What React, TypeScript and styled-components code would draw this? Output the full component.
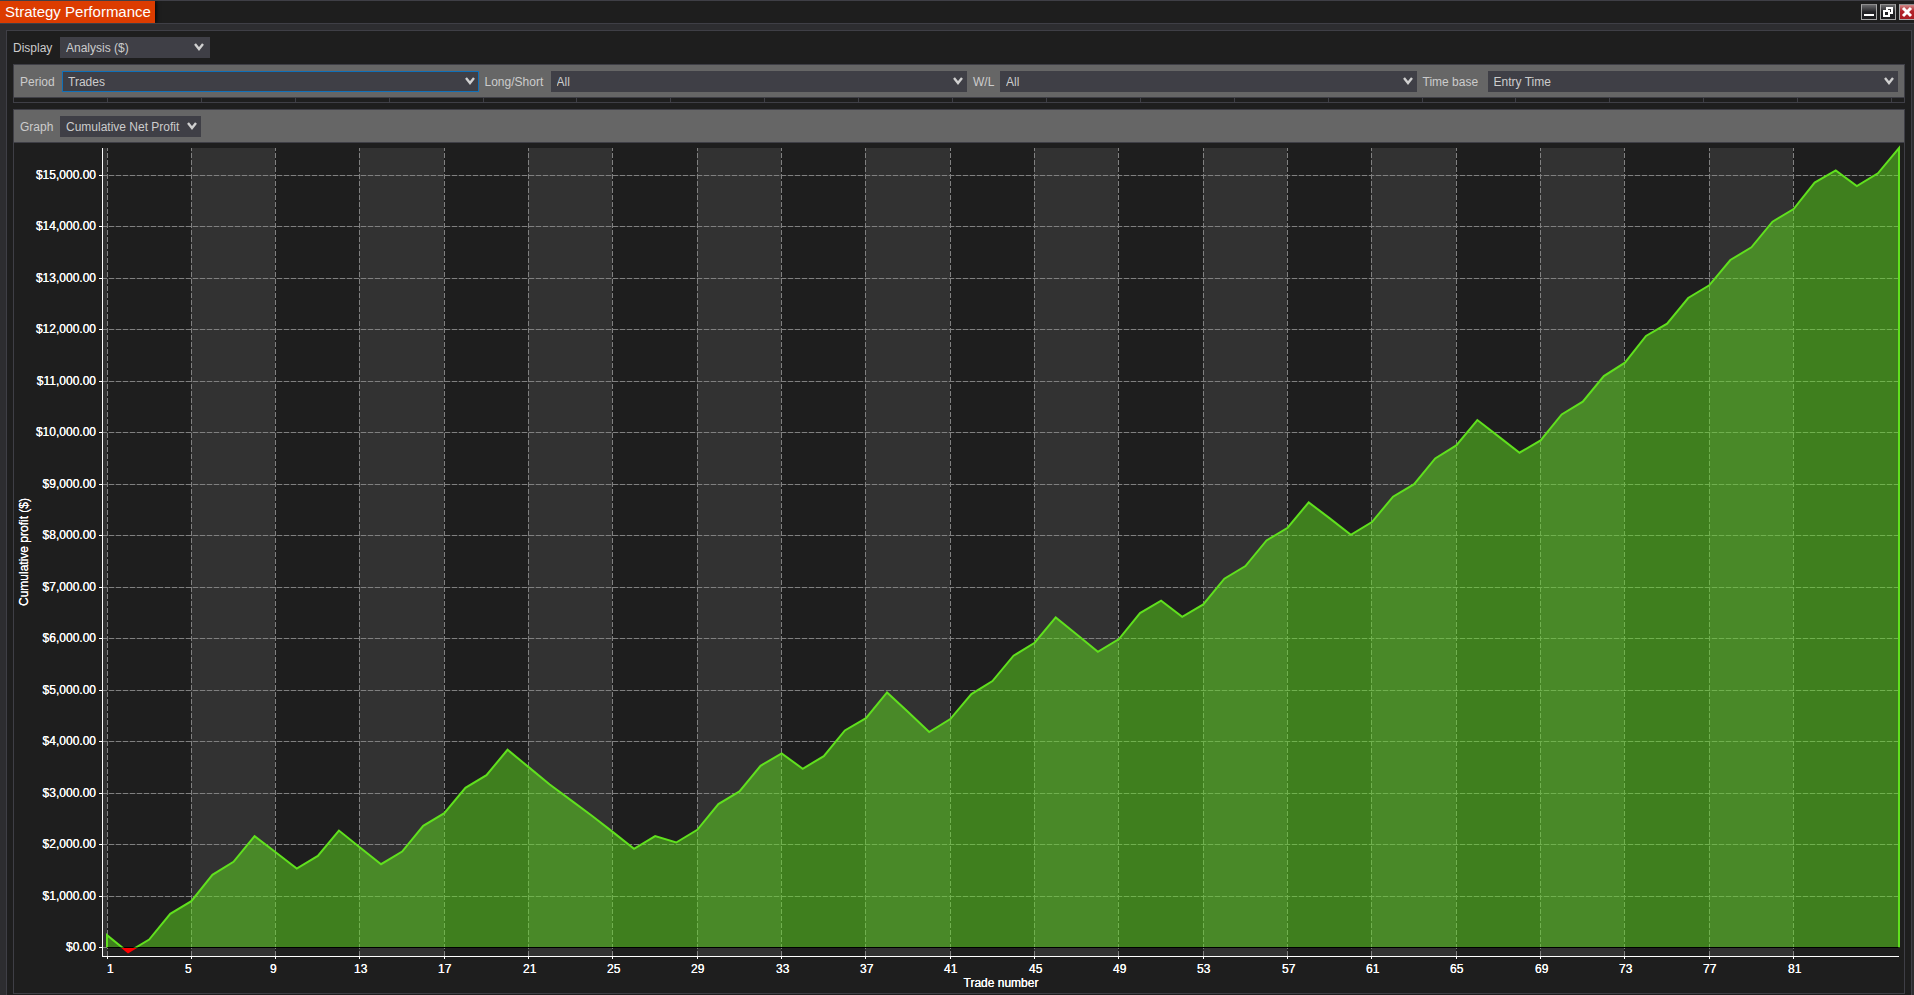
import React, { useLayoutEffect, useRef, useState } from "react";
import styled, { createGlobalStyle, css } from "styled-components";

const color = {
  frame: "#2d2d30",
  surface: "#1e1e1e",
  line: "#3f3f46",
  control: "#3f3f46",
  bar: "#666666",
  text: "#cccccc",
  accent: "#dc3c00",
  focus: "#1070b8",
  band: "#323232",
  grid: "#808080",
  profit: "#60e01e",
  loss: "#ff0000",
};

const GlobalStyle = createGlobalStyle`
  *, *::before, *::after { box-sizing: border-box; }
  body {
    margin: 0;
    background: ${color.frame};
    color: ${color.text};
    font: 12px/16px "Liberation Sans", Arial, sans-serif;
  }
`;

const Window = styled.div`
  display: flex;
  flex-direction: column;
  height: 100vh;
  min-height: 600px;
  overflow: hidden;
`;

const TitleBar = styled.header`
  display: flex;
  justify-content: space-between;
  align-items: center;
  flex: none;
  height: 24px;
  overflow: hidden;
  background: ${color.surface};
  border-top: 1px solid ${color.line};
  border-bottom: 1px solid ${color.line};
`;

const TitleTab = styled.h1`
  width: 155px;
  height: 22px;
  margin: 0;
  padding-left: 5px;
  background: ${color.accent};
  box-shadow: 1px 0 4px #000;
  color: #fff;
  font-size: 15px;
  font-weight: 400;
  line-height: 22px;
  white-space: nowrap;
`;

const WindowButtons = styled.div`
  display: flex;
  gap: 3px;
  margin-right: -1px;
`;

const WindowButton = styled.button<{ $danger?: boolean }>`
  width: 16px;
  height: 16px;
  padding: 0;
  border: 1px solid #a8a8a8;
  border-top-color: #8c8c8c;
  background: ${(p) =>
    p.$danger
      ? "linear-gradient(#cf8a8a, #b3232a 45%, #a81c22)"
      : "linear-gradient(#6a6a6c, #232326 50%, #1c1c1e)"};

  svg { display: block; }
`;

const Panel = styled.main`
  display: flex;
  flex-direction: column;
  flex: 1 1 0;
  min-height: 0;
  margin: 6px 2px 0 6px;
  padding: 6px 6px 1px;
  background: ${color.surface};
  border: 1px solid ${color.line};
  border-bottom: 0;
`;

const DisplayRow = styled.div`
  display: flex;
  align-items: center;
  margin-bottom: 6px;
`;

const Box = styled.section<{ $grow?: boolean }>`
  display: flex;
  flex-direction: column;
  border: 1px solid ${color.line};
  ${(p) =>
    p.$grow
      ? css`
          flex: 1 1 0;
          min-height: 0;
        `
      : css`
          flex: none;
          margin-bottom: 6px;
        `}
`;

const FieldLabel = styled.label<{ $indent?: boolean }>`
  padding-left: ${(p) => (p.$indent ? 6 : 0)}px;
  white-space: nowrap;
`;

const SelectCell = styled.span<{ $last?: boolean }>`
  position: relative;
  display: block;
  padding-right: ${(p) => (p.$last ? 6 : 0)}px;
`;

const SelectBox = styled.select<{ $active?: boolean }>`
  appearance: none;
  display: block;
  width: 100%;
  height: 21px;
  margin: 0;
  padding: 0 18px 0 5px;
  border: 1px solid ${(p) => (p.$active ? color.focus : color.control)};
  border-radius: 0;
  outline: 0;
  background: ${color.control};
  color: ${color.text};
  font: inherit;

  &:focus { border-color: ${color.focus}; }
`;

const Toolbar = styled.div<{ $columns: string }>`
  display: grid;
  grid-template-columns: ${(p) => p.$columns};
  align-items: center;
  flex: none;
  height: 33px;
  padding-left: 6px;
  background: ${color.bar};
  border-bottom: 1px solid ${color.line};

  ${FieldLabel} { padding-top: 2px; }
  ${SelectBox} { padding-top: 1px; }
`;

const DisplayField = styled.div`
  display: grid;
  grid-template-columns: 47px 150px;
  align-items: center;
`;

const Chevron = styled.svg<{ $right: number }>`
  position: absolute;
  top: 6px;
  right: ${(p) => p.$right}px;
  pointer-events: none;
`;

const ColumnStrip = styled.div`
  display: grid;
  grid-template-columns: repeat(20, 1fr);
  height: 4px;
  padding-right: 12px;
`;

const ColumnEdge = styled.span`
  border-right: 1px solid ${color.line};
`;

const ChartArea = styled.div`
  flex: 1 1 0;
  min-height: 0;
  overflow: hidden;

  svg { display: block; }
`;

const AxisText = styled.text`
  fill: #fff;
  font: 12px "Liberation Sans", Arial, sans-serif;
  text-shadow: 0 0 0 #fff;
`;

type SelectProps = {
  id: string;
  options: string[];
  active?: boolean;
  last?: boolean;
  arrow?: number;
};

function Select({ id, options, active, last, arrow = 4 }: SelectProps) {
  return (
    <SelectCell $last={last}>
      <SelectBox id={id} $active={active}>
        {options.map((o) => (
          <option key={o}>{o}</option>
        ))}
      </SelectBox>
      <Chevron $right={last ? arrow + 6 : arrow} width="10" height="8" viewBox="0 0 10 8" aria-hidden="true">
        <path d="M1 1 L5 6 L9 1" fill="none" stroke="#d0d0d0" strokeWidth="2.4" />
      </Chevron>
    </SelectCell>
  );
}

/* Cumulative net profit in dollars after each trade. */
const PROFIT = [
  240, -90, 155, 654, 900, 1412, 1665, 2163, 1852, 1535, 1781, 2273, 1943, 1619, 1865, 2364, 2610,
  3103, 3350, 3842, 3505, 3168, 2864, 2560, 2242, 1918, 2164, 2041, 2288, 2786, 3032, 3531, 3771,
  3473, 3719, 4218, 4457, 4956, 4574, 4186, 4438, 4924, 5176, 5669, 5921, 6413, 6083, 5746, 5992,
  6498, 6737, 6426, 6666, 7165, 7411, 7909, 8155, 8648, 8337, 8019, 8266, 8758, 9002, 9502, 9755,
  10247, 9930, 9613, 9852, 10357, 10604, 11102, 11361, 11880, 12119, 12618, 12864, 13356, 13602,
  14101, 14347, 14859, 15098, 14794, 15040, 15532,
];

const MARGIN = { left: 88, right: 5, top: 5, bottom: 37 };
const FLOOR = -164;
const CEILING = 15532;
const TICK_TRADES = Array.from({ length: 21 }, (_, i) => 1 + i * 4);
const TICK_MONEY = Array.from({ length: 16 }, (_, i) => i * 1000);

function money(v: number) {
  return "$" + v.toLocaleString("en-US", { minimumFractionDigits: 2 });
}

function ProfitChart() {
  const ref = useRef<HTMLDivElement>(null);
  const [size, setSize] = useState({ w: 0, h: 0 });

  useLayoutEffect(() => {
    const el = ref.current;
    if (!el) return;
    const measure = () => setSize({ w: el.clientWidth, h: el.clientHeight });
    measure();
    const observer = new ResizeObserver(measure);
    observer.observe(el);
    return () => observer.disconnect();
  }, []);

  const { w, h } = size;
  const axisX = MARGIN.left;
  const axisY = h - MARGIN.bottom;
  const first = axisX + 5;
  const end = w - MARGIN.right;
  const x = (trade: number) => first + ((trade - 1) * (end - first)) / (PROFIT.length - 1);
  const y = (v: number) => axisY - ((v - FLOOR) * (axisY - MARGIN.top)) / (CEILING - FLOOR);
  const zero = y(0);
  const zeroRow = Math.floor(zero) + 0.5;
  const curve =
    `M${x(1)} ${zero} ` +
    PROFIT.map((v, i) => `L${x(i + 1)} ${y(v)}`).join(" ") +
    ` L${end} ${zero}`;

  return (
    <ChartArea ref={ref}>
      {w > 0 && (
        <svg width={w} height={h} role="img" aria-label="Cumulative profit by trade number">
          <defs>
            <clipPath id="gain">
              <rect x="0" y="0" width={w} height={zeroRow} />
            </clipPath>
            <clipPath id="drawdown">
              <rect x="0" y={zeroRow + 0.5} width={w} height={h} />
            </clipPath>
          </defs>

          <g fill={color.band} shapeRendering="crispEdges">
            <rect x={axisX} y={MARGIN.top} width={5} height={axisY - MARGIN.top} />
            {TICK_TRADES.filter((_, i) => i % 2 === 1).map((t) => (
              <rect
                key={t}
                x={Math.floor(x(t))}
                y={MARGIN.top}
                width={Math.floor(x(t + 4)) - Math.floor(x(t))}
                height={axisY - MARGIN.top}
              />
            ))}
          </g>

          <g stroke={color.grid} shapeRendering="crispEdges">
            {TICK_MONEY.map((v) => {
              const gy = Math.floor(y(v)) + 0.5;
              return (
                <g key={v}>
                  <line x1={axisX} x2={end} y1={gy} y2={gy} strokeOpacity="0.3" />
                  <line x1={axisX} x2={end} y1={gy} y2={gy} strokeDasharray="5 2" />
                </g>
              );
            })}
            {TICK_TRADES.map((t) => {
              const gx = Math.floor(x(t)) + 0.5;
              return (
                <line key={t} x1={gx} x2={gx} y1={axisY} y2={MARGIN.top} strokeDasharray="5 2" />
              );
            })}
          </g>

          <g clipPath="url(#gain)">
            <path d={curve} fill={color.profit} fillOpacity="0.5" />
          </g>
          <path d={`M${x(1)} ${zeroRow}H${end}`} stroke="#000" shapeRendering="crispEdges" />
          <g clipPath="url(#gain)">
            <path d={curve} fill="none" stroke={color.profit} strokeWidth="2" />
          </g>
          <g clipPath="url(#drawdown)">
            <path
              d={`M${x(1)} ${y(PROFIT[0])}L${x(2)} ${y(PROFIT[1])}L${x(3)} ${y(PROFIT[2])}`}
              fill={color.loss}
              stroke={color.loss}
              strokeWidth="2"
            />
          </g>

          <g stroke="#fff" shapeRendering="crispEdges">
            <line x1={axisX + 0.5} x2={axisX + 0.5} y1={MARGIN.top} y2={axisY + 1} />
            <line x1={axisX} x2={end} y1={axisY + 0.5} y2={axisY + 0.5} />
            {TICK_MONEY.map((v) => {
              const ty = Math.floor(y(v)) + 0.5;
              return <line key={v} x1={axisX - 3} x2={axisX} y1={ty} y2={ty} />;
            })}
            {TICK_TRADES.map((t) => {
              const tx = Math.floor(x(t)) + 0.5;
              return <line key={t} x1={tx} x2={tx} y1={axisY} y2={axisY + 3} />;
            })}
          </g>

          {TICK_MONEY.map((v) => (
            <AxisText key={v} x={axisX - 6} y={Math.floor(y(v)) + 4} textAnchor="end">
              {money(v)}
            </AxisText>
          ))}
          {TICK_TRADES.map((t, i) => (
            <AxisText key={t} x={Math.round(x(t)) - (i === 0 ? 0 : 6)} y={axisY + 17}>
              {t}
            </AxisText>
          ))}
          <AxisText x={Math.round((axisX + end) / 2)} y={axisY + 31} textAnchor="middle">
            Trade number
          </AxisText>
          <AxisText
            transform={`translate(14 ${Math.round((MARGIN.top + axisY) / 2)}) rotate(-90)`}
            textAnchor="middle"
          >
            Cumulative profit ($)
          </AxisText>
        </svg>
      )}
    </ChartArea>
  );
}

export default function App() {
  return (
    <>
      <GlobalStyle />
      <Window>
        <TitleBar>
          <TitleTab>Strategy Performance</TitleTab>
          <WindowButtons>
            <WindowButton type="button" aria-label="Minimize">
              <svg width="14" height="14" viewBox="0 0 14 14">
                <rect x="2" y="9" width="10" height="2" fill="#fff" />
              </svg>
            </WindowButton>
            <WindowButton type="button" aria-label="Restore">
              <svg width="14" height="14" viewBox="0 0 14 14" fill="none" stroke="#fff" strokeWidth="2">
                <path d="M6 5V3H11V8H9" />
                <rect x="3" y="6" width="5" height="5" />
              </svg>
            </WindowButton>
            <WindowButton type="button" aria-label="Close" $danger>
              <svg width="14" height="14" viewBox="0 0 14 14" stroke="#fff" strokeWidth="3">
                <path d="M3 3L11 11M11 3L3 11" />
              </svg>
            </WindowButton>
          </WindowButtons>
        </TitleBar>

        <Panel>
          <DisplayRow>
            <DisplayField>
              <FieldLabel htmlFor="display">Display</FieldLabel>
              <Select id="display" arrow={6} options={["Analysis ($)"]} />
            </DisplayField>
          </DisplayRow>

          <Box aria-label="Filters">
            <Toolbar $columns="42px 1fr 72px 1fr 33px 1fr 71px 1fr">
              <FieldLabel htmlFor="period">Period</FieldLabel>
              <Select id="period" active options={["Trades"]} />
              <FieldLabel htmlFor="side" $indent>Long/Short</FieldLabel>
              <Select id="side" options={["All", "Long", "Short"]} />
              <FieldLabel htmlFor="result" $indent>W/L</FieldLabel>
              <Select id="result" options={["All", "Winning", "Losing"]} />
              <FieldLabel htmlFor="timebase" $indent>Time base</FieldLabel>
              <Select id="timebase" last options={["Entry Time", "Exit Time"]} />
            </Toolbar>
            <ColumnStrip aria-hidden="true">
              {Array.from({ length: 20 }, (_, i) => (
                <ColumnEdge key={i} />
              ))}
            </ColumnStrip>
          </Box>

          <Box $grow aria-label="Graph">
            <Toolbar $columns="40px 141px">
              <FieldLabel htmlFor="graph">Graph</FieldLabel>
              <Select id="graph" options={["Cumulative Net Profit"]} />
            </Toolbar>
            <ProfitChart />
          </Box>
        </Panel>
      </Window>
    </>
  );
}
